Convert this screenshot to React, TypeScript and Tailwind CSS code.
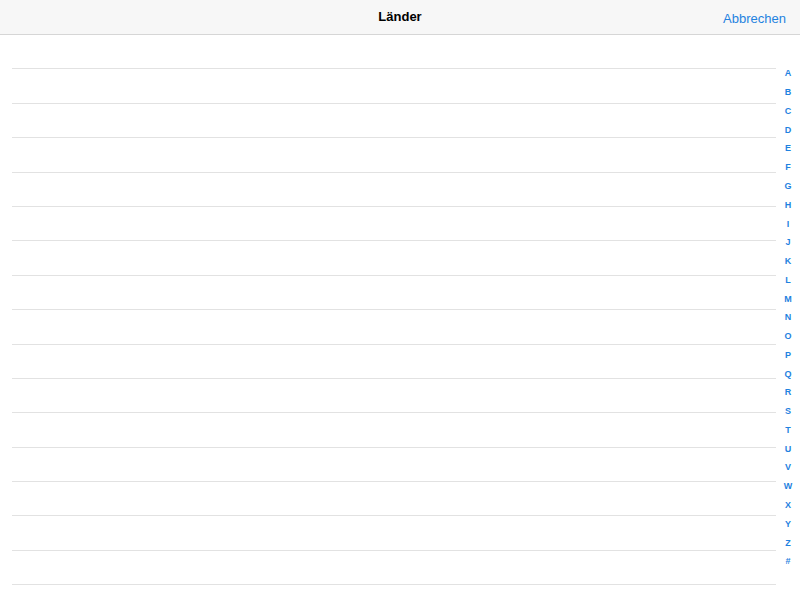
import React from 'react';

const LETTERS = 'ABCDEFGHIJKLMNOPQRSTUVWXYZ#'.split('');
const ROWS = Array.from({ length: 16 }, (_, i) => i);

export default function App() {
  return (
    <div className="relative h-[600px] w-[800px] overflow-hidden bg-white font-['Liberation_Sans',Arial,sans-serif]">
      {/* Navigation bar */}
      <header className="relative flex h-[35px] items-center justify-center border-b border-[#d6d6d6] bg-[#f7f7f7]">
        <h1 className="text-[13px] font-bold text-black">Länder</h1>
        <button className="absolute right-[14px] top-[9px] text-[13px] text-[#1f82e0]">Abbrechen</button>
      </header>

      {/* Empty list rows */}
      <div className="pl-[12px] pr-[24px]">
        {ROWS.map((r) => (
          <div key={r} className="h-[34.4px] border-b border-[#e2e2e2]" />
        ))}
      </div>

      {/* Section index */}
      <div className="absolute right-[4px] top-[64.5px] flex w-[16px] flex-col items-center">
        {LETTERS.map((l) => (
          <span
            key={l}
            className="flex h-[18.77px] items-center justify-center text-[9px] font-bold leading-none text-[#1f82e0]"
          >
            {l}
          </span>
        ))}
      </div>
    </div>
  );
}
